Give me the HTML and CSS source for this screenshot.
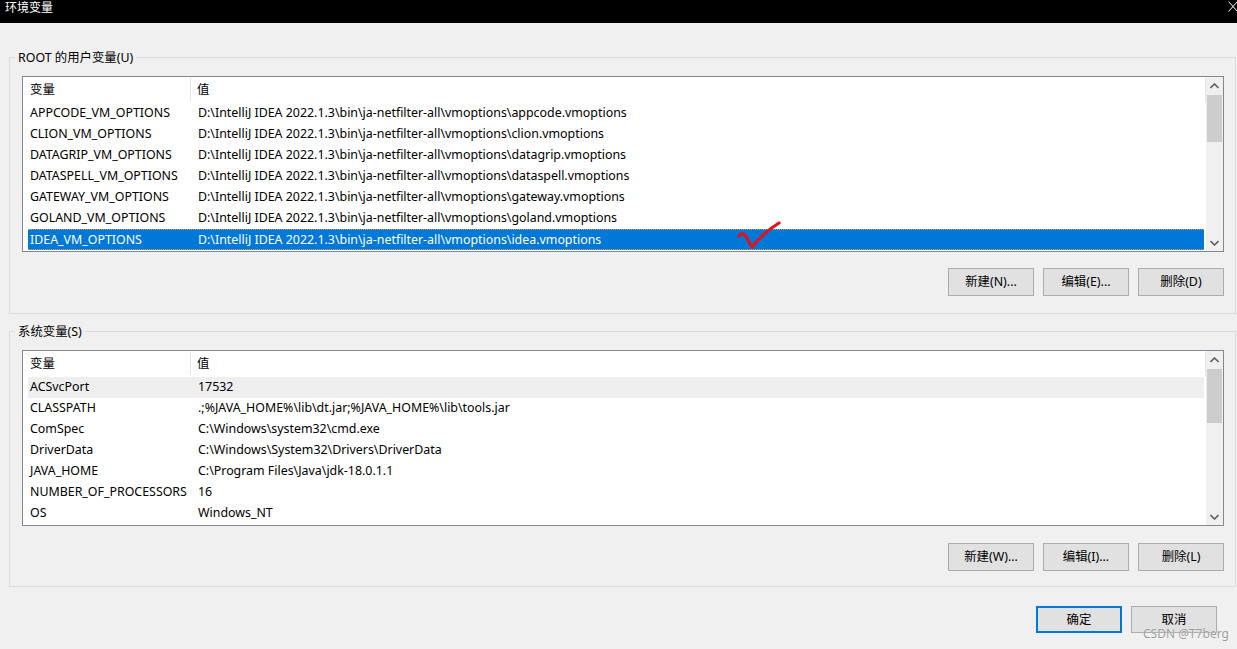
FILE: index.html
```html
<!DOCTYPE html>
<html lang="zh-CN">
<head>
<meta charset="utf-8">
<title>环境变量</title>
<link rel="stylesheet" href="styles.css">
</head>
<body>
<div class="window">
  <div class="titlebar">
    <span class="title">环境变量</span>
    <svg class="close" width="10" height="11" viewBox="0 0 10 11"><path d="M0.5 0.5 L9.5 10.5 M9.5 0.5 L0.5 10.5" stroke="#fff" stroke-width="1" fill="none"/></svg>
  </div>
  <div class="content">
    <section class="group">
      <div class="group-label">ROOT 的用户变量(U)</div>
      <div class="list">
        <div class="list-main">
          <div class="list-header"><div class="c1">变量</div><div class="c2">值</div></div>
          <div class="row"><div class="c1">APPCODE_VM_OPTIONS</div><div class="c2">D:\IntelliJ IDEA 2022.1.3\bin\ja-netfilter-all\vmoptions\appcode.vmoptions</div></div>
          <div class="row"><div class="c1">CLION_VM_OPTIONS</div><div class="c2">D:\IntelliJ IDEA 2022.1.3\bin\ja-netfilter-all\vmoptions\clion.vmoptions</div></div>
          <div class="row"><div class="c1">DATAGRIP_VM_OPTIONS</div><div class="c2">D:\IntelliJ IDEA 2022.1.3\bin\ja-netfilter-all\vmoptions\datagrip.vmoptions</div></div>
          <div class="row"><div class="c1">DATASPELL_VM_OPTIONS</div><div class="c2">D:\IntelliJ IDEA 2022.1.3\bin\ja-netfilter-all\vmoptions\dataspell.vmoptions</div></div>
          <div class="row"><div class="c1">GATEWAY_VM_OPTIONS</div><div class="c2">D:\IntelliJ IDEA 2022.1.3\bin\ja-netfilter-all\vmoptions\gateway.vmoptions</div></div>
          <div class="row"><div class="c1">GOLAND_VM_OPTIONS</div><div class="c2">D:\IntelliJ IDEA 2022.1.3\bin\ja-netfilter-all\vmoptions\goland.vmoptions</div></div>
          <div class="row selected"><div class="c1">IDEA_VM_OPTIONS</div><div class="c2">D:\IntelliJ IDEA 2022.1.3\bin\ja-netfilter-all\vmoptions\idea.vmoptions</div></div>
        </div>
        <div class="scrollbar">
          <div class="arrow"><svg width="9" height="6" viewBox="0 0 9 6"><path d="M0.5 5 L4.5 1 L8.5 5" stroke="#606060" stroke-width="1.6" fill="none"/></svg></div>
          <div class="track"><div class="thumb" style="margin-top:1px;height:47px"></div></div>
          <div class="arrow"><svg width="9" height="6" viewBox="0 0 9 6"><path d="M0.5 1 L4.5 5 L8.5 1" stroke="#606060" stroke-width="1.6" fill="none"/></svg></div>
        </div>
        <svg class="check" width="48" height="32" viewBox="0 0 48 32"><path d="M3 16 Q5 12 9 15 L16 27 Q28 12 43 3" stroke="#e0141e" stroke-width="3.2" fill="none" stroke-linecap="round" stroke-linejoin="round"/></svg>
      </div>
      <div class="btns">
        <button class="btn">新建(N)...</button>
        <button class="btn">编辑(E)...</button>
        <button class="btn">删除(D)</button>
      </div>
    </section>

    <section class="group second">
      <div class="group-label">系统变量(S)</div>
      <div class="list">
        <div class="list-main">
          <div class="list-header"><div class="c1">变量</div><div class="c2">值</div></div>
          <div class="row inactive"><div class="c1">ACSvcPort</div><div class="c2">17532</div></div>
          <div class="row"><div class="c1">CLASSPATH</div><div class="c2">.;%JAVA_HOME%\lib\dt.jar;%JAVA_HOME%\lib\tools.jar</div></div>
          <div class="row"><div class="c1">ComSpec</div><div class="c2">C:\Windows\system32\cmd.exe</div></div>
          <div class="row"><div class="c1">DriverData</div><div class="c2">C:\Windows\System32\Drivers\DriverData</div></div>
          <div class="row"><div class="c1">JAVA_HOME</div><div class="c2">C:\Program Files\Java\jdk-18.0.1.1</div></div>
          <div class="row"><div class="c1">NUMBER_OF_PROCESSORS</div><div class="c2">16</div></div>
          <div class="row"><div class="c1">OS</div><div class="c2">Windows_NT</div></div>
        </div>
        <div class="scrollbar">
          <div class="arrow"><svg width="9" height="6" viewBox="0 0 9 6"><path d="M0.5 5 L4.5 1 L8.5 5" stroke="#606060" stroke-width="1.6" fill="none"/></svg></div>
          <div class="track"><div class="thumb" style="margin-top:1px;height:54px"></div></div>
          <div class="arrow"><svg width="9" height="6" viewBox="0 0 9 6"><path d="M0.5 1 L4.5 5 L8.5 1" stroke="#606060" stroke-width="1.6" fill="none"/></svg></div>
        </div>
      </div>
      <div class="btns">
        <button class="btn">新建(W)...</button>
        <button class="btn">编辑(I)...</button>
        <button class="btn">删除(L)</button>
      </div>
    </section>

    <div class="dialog-btns">
      <button class="btn primary">确定</button>
      <button class="btn">取消</button>
    </div>
  </div>
  <div class="watermark">CSDN @T7berg</div>
</div>
</body>
</html>
```

FILE: styles.css
```css
* { box-sizing: border-box; }
html, body {
  margin: 0;
  padding: 0;
  width: 1237px;
  height: 649px;
  overflow: hidden;
  background: #f0f0f0;
  font-family: "Noto Sans", "Noto Sans CJK SC", sans-serif;
  font-size: 12.4px;
  color: #000;
}
.window {
  position: relative;
  width: 1237px;
  height: 649px;
}
.titlebar {
  height: 23px;
  background: #000;
  color: #fff;
  display: flex;
  align-items: flex-start;
  justify-content: space-between;
  padding: 0 0 0 5px;
}
.title {
  line-height: 16px;
  font-size: 12px;
}
.close {
  margin-top: 1px;
  margin-right: -1px;
}
.content {
  padding: 34px 1px 0 9px;
}
.group {
  position: relative;
  border: 1px solid #dcdcdc;
  padding: 18px 11px 17px 12px;
}
.group.second {
  margin-top: 17px;
  padding-bottom: 15px;
}
.group.second .btns {
  margin-top: 17px;
}
.group-label {
  position: absolute;
  top: -9px;
  left: 5px;
  padding: 0 3px;
  background: #f0f0f0;
  line-height: 17px;
}
.list {
  position: relative;
  height: 176px;
  border: 1px solid #828790;
  background: #fff;
  display: flex;
  overflow: hidden;
}
.list-main {
  flex: 1;
  min-width: 0;
  display: flex;
  flex-direction: column;
}
.list-header {
  height: 25px;
  display: flex;
  align-items: stretch;
  padding-left: 5px;
  border-right: 1px solid #e5e5e5;
  margin: 1px 0 0 0;
}
.list-header .c1,
.list-header .c2 {
  display: flex;
  align-items: center;
  height: 23px;
  padding-bottom: 1px;
}
.list-header .c1 {
  border-right: 1px solid #e5e5e5;
}
.c1 {
  width: 163px;
  flex: none;
  padding-left: 2px;
  white-space: nowrap;
}
.c2 {
  padding-left: 6px;
  white-space: nowrap;
}
.row {
  height: 21px;
  display: flex;
  align-items: center;
  margin: 0 2px 0 5px;
  padding-bottom: 2px;
}
.row .c2 { padding-left: 7px; }
.row.selected {
  background: #0078d7;
  color: #fff;
  border-top: 1px dotted #d79a5a;
  border-bottom: 1px dotted #d79a5a;
  padding-bottom: 1px;
}
.row.inactive {
  background: #efefef;
}
.scrollbar {
  width: 17px;
  flex: none;
  background: #f0f0f0;
  display: flex;
  flex-direction: column;
}
.arrow {
  height: 17px;
  display: flex;
  align-items: center;
  justify-content: center;
}
.track {
  flex: 1;
  padding: 0 1px;
}
.thumb {
  background: #cdcdcd;
}
.check {
  position: absolute;
  left: 713px;
  top: 143px;
}
.btns {
  display: flex;
  justify-content: flex-end;
  gap: 9px;
  margin-top: 16px;
}
.btn {
  width: 86px;
  height: 28px;
  background: #e1e1e1;
  border: 1px solid #adadad;
  font-family: inherit;
  font-size: 12.4px;
  line-height: 14px;
  color: #000;
  padding: 0;
}
.dialog-btns {
  display: flex;
  justify-content: flex-end;
  gap: 9px;
  margin-top: 19px;
  padding-right: 19px;
}
.dialog-btns .btn {
  height: 27px;
}
.btn.primary {
  border: 2px solid #0078d7;
}
.watermark {
  position: absolute;
  left: 1143px;
  top: 628px;
  color: rgba(130, 130, 130, 0.8);
  font-size: 12px;
  line-height: 12px;
  text-shadow: 0 0 1px #fff;
}
```
